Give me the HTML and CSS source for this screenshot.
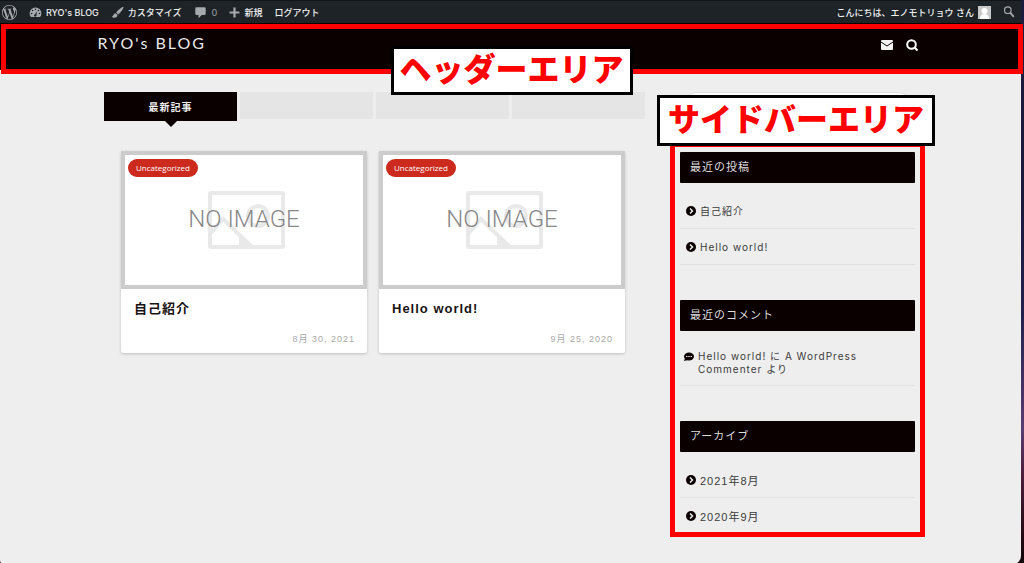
FILE: index.html
```
<!DOCTYPE html>
<html lang="ja">
<head>
<meta charset="utf-8">
<meta name="viewport" content="width=device-width, initial-scale=1">
<title>RYO's BLOG</title>
<link rel="stylesheet" href="styles.css">
</head>
<body>
<svg class="defs" aria-hidden="true">
  <symbol id="arrow" viewBox="0 0 20 20"><circle cx="10" cy="10" r="10" fill="#0b0000"/><path d="M8 5l5 5-5 5" fill="none" stroke="#eee" stroke-width="3"/></symbol>
  <symbol id="noimage" viewBox="0 0 246 138">
    <rect x="2" y="2" width="242" height="134" fill="#fff" stroke="#ccc" stroke-width="4"/>
    <g fill="none" stroke="#e9e9e9" stroke-width="4"><rect x="89" y="42" width="73" height="54" rx="1"/><circle cx="137" cy="65" r="10"/><path d="M90 82l12-14 28 27"/></g>
    <path d="M118 84l14 13h-14z" fill="#e9e9e9"/>
  </symbol>
</svg>
<div class="window">
  <nav class="adminbar" aria-label="ツールバー">
    <a href="#" aria-label="WordPress"><svg width="15" height="15" viewBox="0 0 24 24"><path fill="#a7aaad" d="M21.469 6.825c.84 1.537 1.318 3.3 1.318 5.175 0 3.979-2.156 7.456-5.363 9.325l3.295-9.527c.615-1.54.82-2.771.82-3.864 0-.405-.026-.78-.07-1.11m-7.981.105c.647-.03 1.232-.105 1.232-.105.582-.075.514-.93-.067-.899 0 0-1.755.135-2.88.135-1.064 0-2.85-.15-2.85-.15-.585-.03-.661.855-.075.885 0 0 .54.061 1.125.09l1.68 4.605-2.37 7.08L5.354 6.9c.649-.03 1.234-.1 1.234-.1.585-.075.516-.93-.065-.896 0 0-1.746.138-2.874.138-.2 0-.438-.008-.69-.015C4.911 3.15 8.235 1.215 12 1.215c2.809 0 5.365 1.072 7.286 2.833-.046-.003-.091-.009-.141-.009-1.06 0-1.812.923-1.812 1.914 0 .89.513 1.643 1.06 2.531.411.72.89 1.643.89 2.977 0 .915-.354 1.994-.821 3.479l-1.075 3.585-3.9-11.61zM12 22.784c-1.059 0-2.081-.153-3.048-.437l3.237-9.406 3.315 9.087c.024.053.05.101.078.149-1.12.393-2.325.609-3.582.609M1.211 12c0-1.564.336-3.05.935-4.39L7.29 21.709C3.694 19.96 1.212 16.271 1.211 12M12 0C5.385 0 0 5.385 0 12s5.385 12 12 12 12-5.385 12-12S18.615 0 12 0"/></svg></a>
    <a href="#"><svg width="13" height="13" viewBox="0 0 20 20"><path fill="#a7aaad" d="M3 17a9 9 0 1 1 14 0z"/><g fill="#1d2327"><circle cx="10" cy="5" r="1.2"/><circle cx="5.500" cy="7" r="1.200"/><circle cx="14.500" cy="7" r="1.200"/><circle cx="4" cy="11.500" r="1.200"/><circle cx="16" cy="11.500" r="1.200"/><path d="M12.500 7.500l-1 6a2 2 0 1 1-2-1z"/></g></svg>RYO's BLOG</a>
    <a href="#"><svg width="13" height="13" viewBox="0 0 20 20" fill="#a7aaad"><path d="M19 1c-2 0-8 5-11 9l3 3c4-3 9-10 8-12zM7 11c-3 0-3 4-6 6 4 2 9 1 9-3z"/></svg>カスタマイズ</a>
    <a href="#" class="count"><svg width="13" height="13" viewBox="0 0 20 20" fill="#a7aaad"><path d="M4 2h12q2 0 2 2v8q0 2-2 2h-4l-5 5v-5H4q-2 0-2-2V4q0-2 2-2z"/></svg>0</a>
    <a href="#"><svg width="11" height="11" viewBox="0 0 20 20" fill="#a7aaad"><path d="M8 1h4v7h7v4h-7v7H8v-7H1V8h7z"/></svg>新規</a>
    <a href="#">ログアウト</a>
    <a href="#" class="account">こんにちは、エノモトリョウ さん<svg width="13" height="13" viewBox="0 0 13 13"><path fill="#c8c8c8" d="M0 0h13v13H0z"/><circle cx="6.500" cy="5" r="3" fill="#fff"/><path d="M2 13q0-5 4.500-5t4.500 5z" fill="#fff"/></svg></a>
    <button type="button" aria-label="検索"><svg width="12" height="12" viewBox="0 0 20 20" fill="none" stroke="#a7aaad"><circle cx="8" cy="7" r="5.500" stroke-width="2"/><path d="M12 11l6 7" stroke-width="3"/></svg></button>
  </nav>

  <header class="header">
    <div class="header-inner">
      <a href="#" class="logo">RYO's BLOG</a>
      <a href="#" class="head-icon" aria-label="メール"><svg width="12" height="10" viewBox="0 0 12 10"><rect width="12" height="10" rx="1" fill="#f4f4f4"/><path d="M0 2l6 4 6-4" fill="none" stroke="#0b0000"/></svg></a>
      <button type="button" class="head-icon" aria-label="サイト内検索"><svg width="12" height="12" viewBox="0 0 12 12" fill="none" stroke="#fff" stroke-width="2"><circle cx="5.500" cy="5.500" r="4.300"/><path d="M8.500 8.500l3 3"/></svg></button>
    </div>
    <div class="frame frame-header"></div>
    <div class="label label-header">ヘッダーエリア</div>
  </header>

  <div class="content">
    <main class="main">
      <div class="tabs">
        <button type="button" class="tab active">最新記事</button>
        <button type="button" class="tab" aria-label="タブ2"></button>
        <button type="button" class="tab" aria-label="タブ3"></button>
        <button type="button" class="tab" aria-label="タブ4"></button>
      </div>
      <div class="cards">
        <article class="card">
          <svg class="thumb" viewBox="0 0 246 138"><use href="#noimage"/><text x="123" y="76" text-anchor="middle">NO IMAGE</text></svg>
          <a href="#" class="badge">Uncategorized</a>
          <h2>自己紹介</h2>
          <time datetime="2021-08-30">8月 30, 2021</time>
        </article>
        <article class="card">
          <svg class="thumb" viewBox="0 0 246 138"><use href="#noimage"/><text x="123" y="76" text-anchor="middle">NO IMAGE</text></svg>
          <a href="#" class="badge">Uncategorized</a>
          <h2>Hello world!</h2>
          <time datetime="2020-09-25">9月 25, 2020</time>
        </article>
      </div>
    </main>

    <aside class="sidebar">
      <input type="search" class="search" aria-label="検索">
      <div class="label label-sidebar">サイドバーエリア</div>
      <div class="widgets">
        <section class="widget">
          <h3>最近の投稿</h3>
          <ul>
            <li><svg><use href="#arrow"/></svg><a href="#">自己紹介</a></li>
            <li><svg><use href="#arrow"/></svg><a href="#">Hello world!</a></li>
          </ul>
        </section>
        <section class="widget">
          <h3>最近のコメント</h3>
          <ul class="comments">
            <li><svg viewBox="0 0 10 10"><ellipse cx="5" cy="4.500" rx="5" ry="4" fill="#0b0000"/><path d="M1 6L0 9l4-1z" fill="#0b0000"/><path d="M2 4h1.500v1H2zm2.300 0h1.500v1H4.300zm2.300 0H8v1H6.600z" fill="#eee"/></svg><span><a href="#">Hello world!</a> に <a href="#">A WordPress Commenter</a> より</span></li>
          </ul>
        </section>
        <section class="widget">
          <h3>アーカイブ</h3>
          <ul class="archive">
            <li><svg><use href="#arrow"/></svg><a href="#">2021年8月</a></li>
            <li><svg><use href="#arrow"/></svg><a href="#">2020年9月</a></li>
          </ul>
        </section>
        <div class="frame frame-sidebar"></div>
      </div>
    </aside>
  </div>
</div>
</body>
</html>
```
FILE: styles.css
```
* { box-sizing: border-box; }
body {
  margin: 0;
  min-height: 100vh;
  display: flex;
  padding-right: 3px;
  background: linear-gradient(#1b1b3d 0%, #1b1b3d 35%, #20204a 55%, #5a3c70 76%, #4b1f3c 84%, #240a12 95%, #100408);
  font-family: "Liberation Sans", "Noto Sans CJK JP", sans-serif;
  color: #3b3b3b;
}
a { color: inherit; text-decoration: none; }
button { border: 0; padding: 0; background: none; font: inherit; }
h2, h3, ul { margin: 0; padding: 0; }
ul { list-style: none; }
svg { display: block; flex: none; }
.defs { position: absolute; width: 0; height: 0; }
.window {
  flex: 1;
  min-width: 0;
  background: #eee;
  border-radius: 0 0 8px 4px;
}

.adminbar {
  display: flex;
  align-items: center;
  gap: 12px;
  height: 23px;
  padding: 0 6px 0 2px;
  background: #1d2327;
  border-top: 1px solid #101416;
  color: #f0f0f1;
  font-family: Inter, "Noto Sans CJK JP", sans-serif;
  font-size: 9px;
  font-weight: 500;
  white-space: nowrap;
}
.adminbar a { display: flex; align-items: center; gap: 4px; }
.adminbar .count { color: #8c9094; gap: 5px; }
.adminbar .account { margin-left: auto; }

.header {
  position: relative;
  height: 47px;
  background: #0b0000;
}
.header-inner {
  display: flex;
  align-items: center;
  gap: 13px;
  max-width: 826px;
  height: 43px;
  margin: 0 auto;
  padding-right: 6px;
}
.logo {
  margin-right: auto;
  padding-bottom: 5px;
  font-family: Lato, sans-serif;
  font-size: 16px;
  letter-spacing: 2px;
  color: #e8e8e8;
}
.frame {
  position: absolute;
  border: 5px solid #f00;
  pointer-events: none;
}
.frame-header { inset: 1px -2px -4px 1px; }
.label {
  position: absolute;
  z-index: 2;
  padding-bottom: 6px;
  border: 3px solid #000;
  background: #fff;
  color: #f00;
  font-family: "Noto Sans CJK JP", sans-serif;
  font-size: 32px;
  font-weight: 900;
  text-align: center;
  white-space: nowrap;
}
.label-header {
  left: 50%;
  top: 23px;
  width: 242px;
  margin-left: -120px;
  line-height: 37px;
}

.content {
  display: grid;
  grid-template-columns: minmax(0, 541fr) minmax(0, 235fr);
  gap: 35px;
  max-width: 813px;
  margin: 0 auto;
  padding: 22px 2px 27px 0;
}
.tabs { display: flex; gap: 3px; height: 29px; align-items: flex-start; }
.tab { position: relative; flex: 1; height: 27px; background: #e5e5e5; }
.tab.active {
  height: 29px;
  background: #0b0000;
  color: #eee;
  font-size: 10px;
  font-weight: 700;
  letter-spacing: 1px;
}
.tab.active::after {
  content: "";
  position: absolute;
  left: 50%;
  top: 100%;
  margin-left: -6px;
  border: 6px solid transparent;
  border-top-color: #0b0000;
  border-bottom: 0;
}
.cards {
  display: grid;
  grid-template-columns: 1fr 1fr;
  gap: 12px;
  margin: 30px 20px 0 17px;
}
.card {
  position: relative;
  background: #fff;
  border-radius: 2px;
  box-shadow: 0 1px 3px rgba(0, 0, 0, .2);
}
.thumb { width: 100%; height: auto; }
.thumb text { font-family: Roboto, sans-serif; font-size: 24px; font-weight: 300; fill: #888; }
.badge {
  position: absolute;
  left: 7px;
  top: 8px;
  padding: 0 8px;
  border-radius: 9px;
  background: #cc2a1d;
  color: #fff;
  font-family: "Open Sans", sans-serif;
  font-size: 8px;
  line-height: 18px;
}
.card h2 {
  padding: 10px 13px 0;
  color: #1a1313;
  font-size: 13px;
  line-height: 20px;
  letter-spacing: 1px;
}
.card time {
  display: block;
  padding: 14px 12px 7px;
  color: #a8a8a8;
  font-size: 9px;
  line-height: 13px;
  letter-spacing: 1px;
  text-align: right;
}

.sidebar { position: relative; }
.search {
  display: block;
  width: 100%;
  height: 36px;
  border: 1px solid #e0e0e0;
  border-radius: 18px;
  background: #fff;
}
.label-sidebar {
  left: -23px;
  right: -20px;
  top: 3px;
  line-height: 39px;
}
.widgets { position: relative; margin-top: 24px; }
.frame-sidebar { inset: -10px -10px 0; }
.widget { padding-bottom: 35px; }
.widget:last-of-type { padding-bottom: 3px; }
.widget h3 {
  padding: 0 10px;
  border-radius: 1px;
  background: #0b0000;
  color: #ddd;
  font-size: 11px;
  font-weight: 400;
  line-height: 31px;
  letter-spacing: 1px;
}
.widget ul {
  padding-top: 10px;
  font-family: Inter, "Noto Sans CJK JP", sans-serif;
  font-size: 10px;
  letter-spacing: 1px;
}
.widget li {
  display: flex;
  align-items: center;
  gap: 4px;
  min-height: 36px;
  padding: 0 6px;
  border-bottom: 1px solid #e2e2e2;
}
.widget li svg { width: 10px; height: 10px; }
.widget .archive { font-family: "Liberation Sans", "Noto Sans CJK JP", sans-serif; font-size: 11px; }
.archive li:last-child { border-bottom: 0; }
.comments li {
  align-items: flex-start;
  padding: 9px 4px;
  line-height: 13px;
}
.comments svg { margin-top: 2px; }
```
